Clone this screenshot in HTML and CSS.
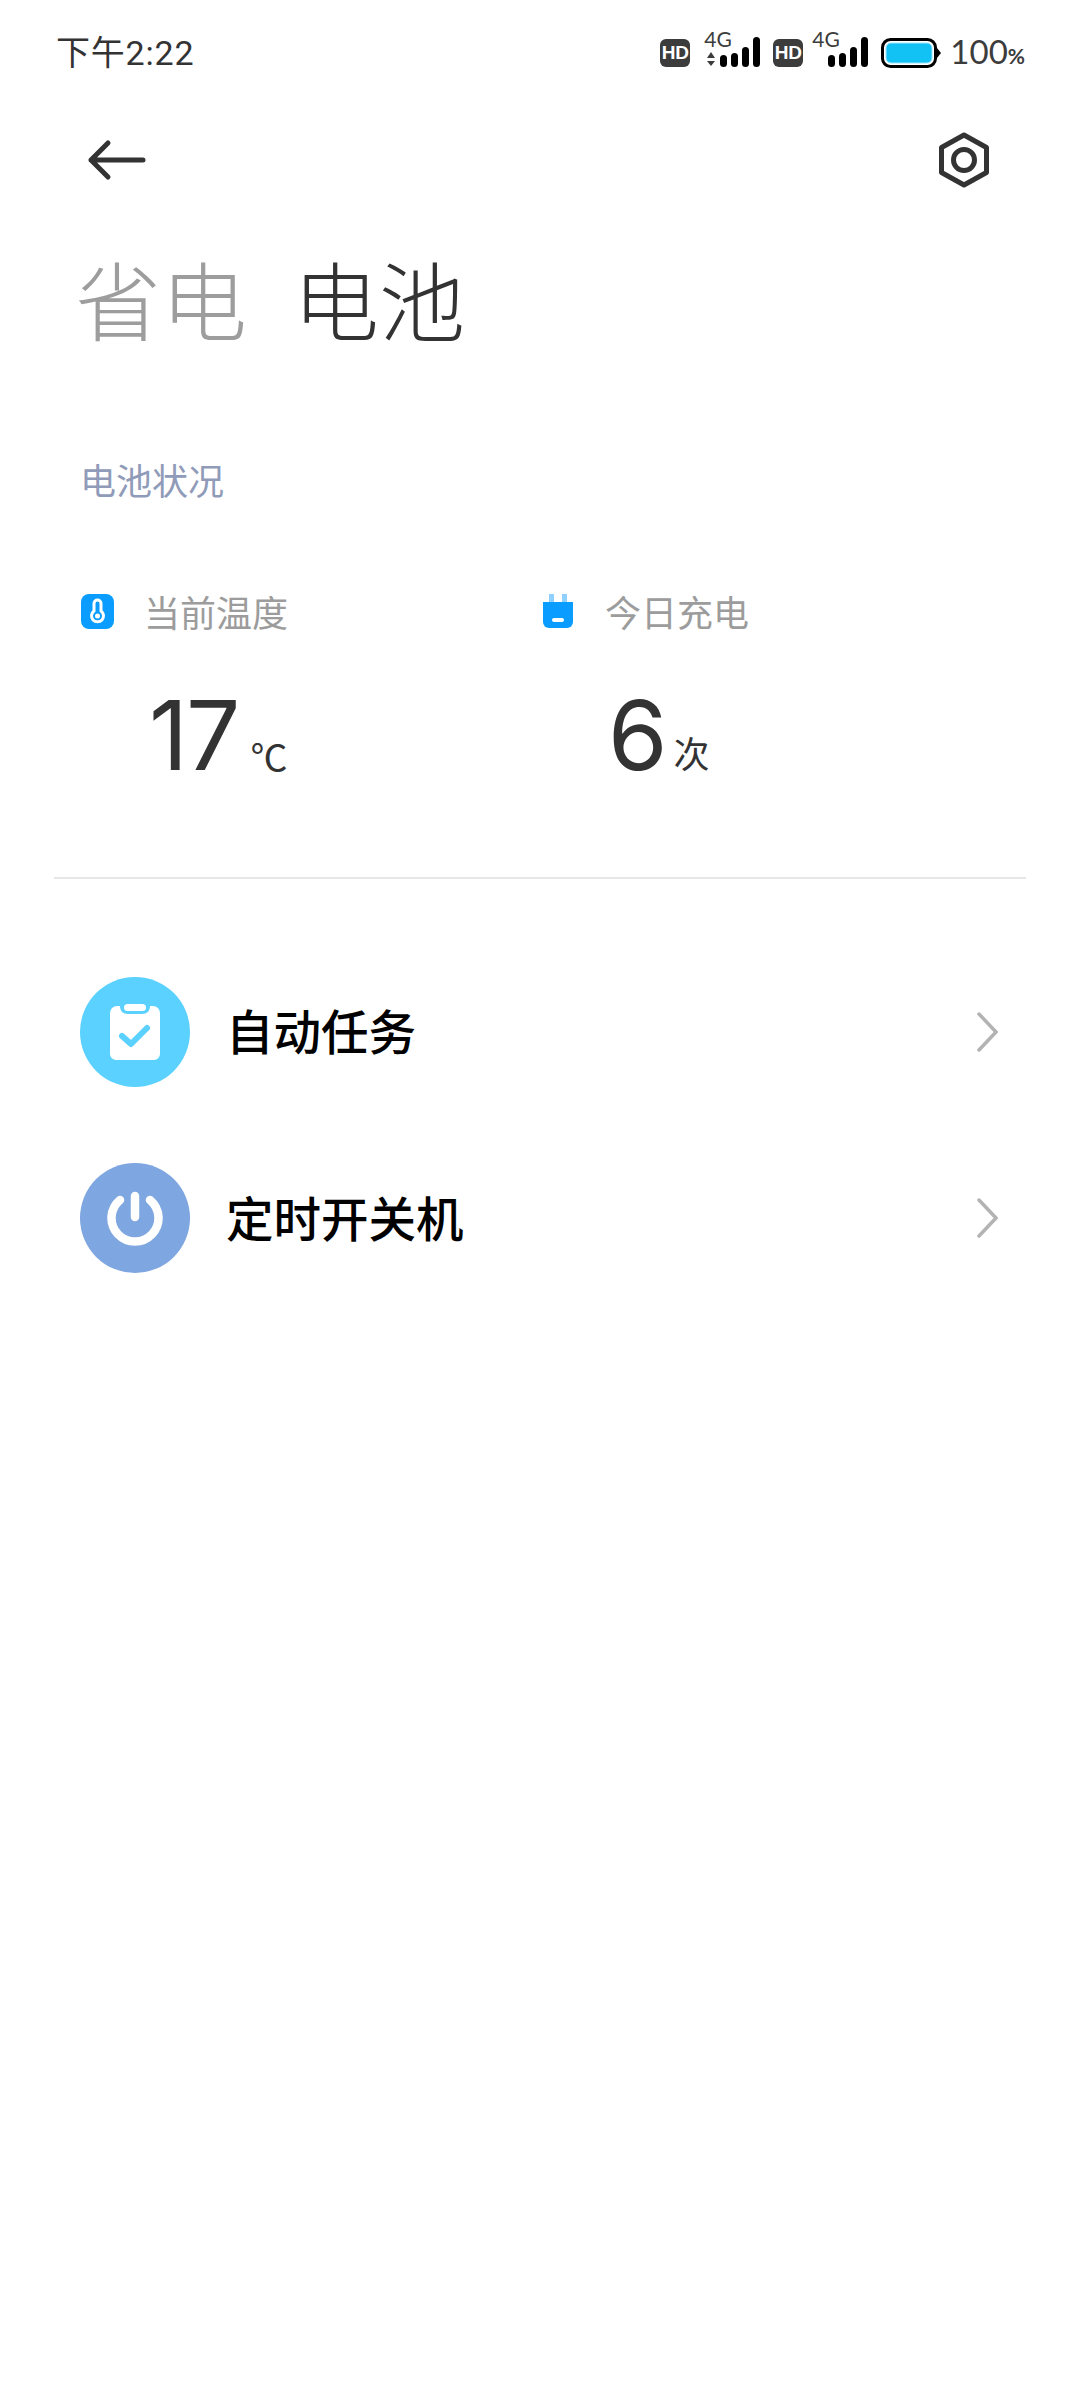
FILE: index.html
```html
<!DOCTYPE html>
<html lang="zh-CN">
<head>
<meta charset="utf-8">
<title>电池</title>
<link rel="stylesheet" href="styles.css">
</head>
<body>
<div class="page">
  <header class="status">
    <div class="time">下午2:22</div>
    <div class="status-icons">
      <span class="hd">HD</span>
      <span class="signal signal-a">
        <span class="g4">4G</span>
        <svg width="56" height="44" viewBox="0 0 56 44"><path class="arr" d="M7 21l4 6H3zM7 35l4-5H3z"/><g class="bars"><rect x="16" y="24" width="7" height="12" rx="3.5"/><rect x="27" y="22" width="7" height="14" rx="3.5"/><rect x="38" y="16" width="7" height="20" rx="3.5"/><rect x="49" y="6" width="7" height="30" rx="3.5"/></g></svg>
      </span>
      <span class="hd hd-b">HD</span>
      <span class="signal signal-b">
        <span class="g4">4G</span>
        <svg width="56" height="44" viewBox="0 0 56 44"><g class="bars"><rect x="16" y="24" width="7" height="12" rx="3.5"/><rect x="27" y="22" width="7" height="14" rx="3.5"/><rect x="38" y="16" width="7" height="20" rx="3.5"/><rect x="49" y="6" width="7" height="30" rx="3.5"/></g></svg>
      </span>
      <svg class="battery" width="60" height="30" viewBox="0 0 60 30"><rect x="1.5" y="1.5" width="53" height="27" rx="8" fill="#fff" stroke="#000" stroke-width="3"/><rect x="5" y="5" width="46" height="20" rx="5" fill="#12c2f5" stroke="#9fe4fa" stroke-width="1"/><path d="M56 10l4 5-4 5z" fill="#000"/></svg>
      <span class="pct">100<small>%</small></span>
    </div>
  </header>

  <nav class="toolbar">
    <svg width="60" height="42" viewBox="0 0 60 42"><path d="M56 21H4M21 4L4 21l17 17" fill="none" stroke="#333" stroke-width="5" stroke-linecap="round" stroke-linejoin="round"/></svg>
    <svg width="52" height="56" viewBox="0 0 52 56"><path d="M26 3l22.500 12.500v25L26 53 3.500 40.500v-25z" fill="none" stroke="#333" stroke-width="5" stroke-linejoin="round"/><circle cx="26" cy="28" r="10.500" fill="none" stroke="#333" stroke-width="5"/></svg>
  </nav>

  <div class="tabs">
    <span class="tab tab-off">省电</span>
    <span class="tab">电池</span>
  </div>

  <div class="section-label">电池状况</div>

  <section class="stats">
    <div class="stat">
      <div class="stat-head">
        <svg class="stat-icon" width="33" height="35" viewBox="0 0 33 35"><rect width="33" height="35" rx="8" fill="#0a9dff"/><path d="M13 17V9.500a3.500 3.500 0 017 0V17a6 6 0 11-7 0z" fill="none" stroke="#fff" stroke-width="3"/><circle cx="16.500" cy="22" r="2.500" fill="#fff"/></svg>
        <span class="stat-label">当前温度</span>
      </div>
      <div class="stat-value"><span class="num">17</span><span class="unit unit-c">℃</span></div>
    </div>
    <div class="stat stat-b">
      <div class="stat-head">
        <svg class="stat-icon" width="30" height="36" viewBox="0 0 30 36"><path d="M6 0h5v8H6zM19 0h5v8h-5z" fill="#8fd0ff"/><path d="M0 8h30v20a6 6 0 01-6 6H6a6 6 0 01-6-6z" fill="#0a9dff"/><rect x="9" y="24" width="12" height="4" rx="2" fill="#fff"/></svg>
        <span class="stat-label">今日充电</span>
      </div>
      <div class="stat-value"><span class="num">6</span><span class="unit">次</span></div>
    </div>
  </section>

  <hr class="divider">

  <ul class="list">
    <li class="row">
      <span class="circle circle-task">
        <svg width="50" height="56" viewBox="0 0 50 56"><path d="M7 1h3c0 5 3 8 8 8h14c5 0 8-3 8-8h3a7 7 0 017 7v41a6 6 0 01-6 6H6a6 6 0 01-6-6V8a7 7 0 017-7z" fill="#fff" transform="translate(0 1)"/><rect x="14" y="0" width="22" height="7" rx="3.500" fill="#fff"/><path d="M12 32l9 8 16-16" fill="none" stroke="#5ad1ff" stroke-width="6" stroke-linecap="round" stroke-linejoin="round"/></svg>
      </span>
      <span class="row-title">自动任务</span>
      <svg class="chev" width="22" height="40" viewBox="0 0 22 40"><path d="M3 2l17 18L3 38" fill="none" stroke="#b3b3b3" stroke-width="3.500" stroke-linecap="round"/></svg>
    </li>
    <li class="row">
      <span class="circle circle-power">
        <svg width="56" height="56" viewBox="0 0 56 56"><path d="M13 10a23.500 23.500 0 1030 0" fill="none" stroke="#fff" stroke-width="8.500" stroke-linecap="round"/><path d="M28 6v21" fill="none" stroke="#fff" stroke-width="8.500" stroke-linecap="round"/></svg>
      </span>
      <span class="row-title">定时开关机</span>
      <svg class="chev" width="22" height="40" viewBox="0 0 22 40"><path d="M3 2l17 18L3 38" fill="none" stroke="#b3b3b3" stroke-width="3.500" stroke-linecap="round"/></svg>
    </li>
  </ul>
</div>
</body>
</html>
```
FILE: styles.css
```css
* { box-sizing: border-box; }
html, body { margin: 0; padding: 0; background: #fff; }
body { font-family: "Noto Sans CJK SC", "Noto Sans", sans-serif; color: #333; }
.page { width: 1080px; height: 2400px; overflow: hidden; }

.status { height: 104px; padding: 2px 55px 0 56px; display: flex; align-items: center; justify-content: space-between; }
.time { font-family: "Roboto", "Noto Sans CJK SC", sans-serif; font-size: 34px; font-weight: 400; letter-spacing: 0.8px; color: #333; line-height: 40px; }
.status-icons { display: flex; align-items: center; }
.hd { width: 30px; height: 28px; background: #3c3c3c; border-radius: 6px; color: #fff; font: 700 19px/28px "Liberation Sans", sans-serif; text-align: center; }
.signal { position: relative; display: block; width: 56px; height: 44px; margin-left: 14px; }
.signal svg { display: block; }
.g4 { position: absolute; left: 0; top: -2px; font: 400 21px/20px "Lato", sans-serif; color: #3c3c3c; }
.arr { fill: #3c3c3c; }
.bars { fill: #000; }
.hd-b { margin-left: 13px; }
.signal-b { margin-left: 9px; }
.battery { margin-left: 13px; }
.pct { margin-left: 9px; font: 400 33px/40px "Lato", sans-serif; color: #3c3c3c; }
.pct small { font-size: 21px; font-weight: 700; }

.toolbar { height: 112px; padding: 0 90px 0 87px; display: flex; align-items: center; justify-content: space-between; }

.tabs { margin-top: 27px; padding-left: 75px; display: flex; gap: 46px; }
.tab { font-size: 86px; font-weight: 300; line-height: 110px; color: #333; }
.tab-off { color: #9d9d9d; }

.section-label { margin-top: 101px; padding-left: 80px; font-size: 36px; line-height: 50px; color: #8f9bb8; }

.stats { margin-top: 82px; padding-left: 81px; display: flex; }
.stat { width: 462px; }
.stat-head { display: flex; align-items: center; height: 50px; }
.stat-icon { display: block; flex: none; }
.stat-label { margin-left: 30px; font-size: 36px; line-height: 50px; color: #9c9c9c; }
.stat-b .stat-label { margin-left: 32px; }
.stat-b .stat-icon { margin-top: 2px; }
.stat-value { margin-top: 44px; padding-left: 68px; height: 110px; line-height: 110px; }
.stat-b .stat-value { padding-left: 65px; }
.num { font-family: "Inter", sans-serif; font-size: 96px; letter-spacing: -2px; color: #333; }
.unit { margin-left: 8px; font-size: 36px; line-height: 1; color: #333; vertical-align: 2px; }
.unit-c { margin-left: 12px; font-size: 37px; vertical-align: -2px; }

.divider { margin: 87px 54px 0; border: 0; height: 2px; background: #e6e6e6; }

.list { list-style: none; margin: 59.500px 0 0; padding: 0 82px 0 80px; }
.row { height: 186.500px; display: flex; align-items: center; }
.circle { width: 110px; height: 110px; border-radius: 50%; display: flex; align-items: center; justify-content: center; flex: none; }
.circle-task { background: #5ad1ff; }
.circle-power { background: #7ea6e0; }
.row-title { margin-left: 36px; padding-bottom: 4px; font-size: 47.500px; font-weight: 500; color: #000; flex: 1; }
.chev { flex: none; }
```
